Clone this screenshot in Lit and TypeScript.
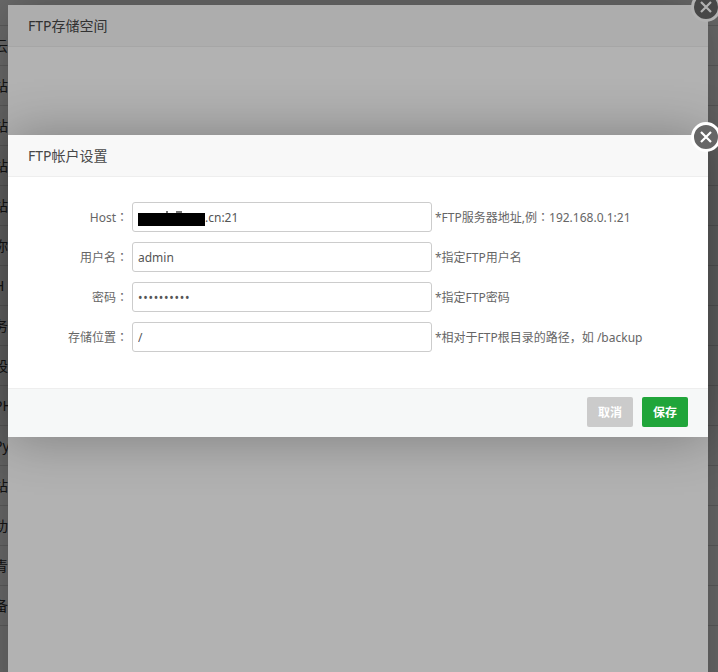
import { LitElement, html, css } from "lit";
import { customElement } from "lit/decorators.js";

const ROWS = ["", "云", "站", "站", "站", "站", "你", "H", "务", "股", "PH", "Py", "站", "功", "青", "备"];
const colon = html`<span class="colon">：</span>`;
const FIELDS = [
  { label: "Host", value: ".cn:21", type: "text", hint: html`*FTP服务器地址,例${colon}192.168.0.1:21`, hidden: true },
  { label: "用户名", value: "admin", type: "text", hint: html`*指定FTP用户名`, hidden: false },
  { label: "密码", value: "1234567890", type: "password", hint: html`*指定FTP密码`, hidden: false },
  { label: "存储位置", value: "/", type: "text", hint: html`*相对于FTP根目录的路径，如 /backup`, hidden: false },
];

@customElement("app-root")
export class AppRoot extends LitElement {
  static styles = css`
    :host {
      display: block;
      position: relative;
      width: 718px;
      height: 672px;
      overflow: hidden;
      background: #fff;
      font-family: "Noto Sans", "Noto Sans CJK SC", sans-serif;
      color: #333;
    }
    .page { margin-top: -14px; }
    .row {
      box-sizing: border-box;
      height: 40px;
      line-height: 39px;
      border-bottom: 1px solid #ddd;
      font-size: 14px;
      text-indent: -6px;
    }
    .mask { position: absolute; inset: 0; }
    .mask.first { background: rgba(0, 0, 0, 0.4); }
    .mask.second { background: rgba(0, 0, 0, 0.3); }
    .modal {
      position: absolute;
      left: 8px;
      width: 700px;
      background: #fff;
      box-shadow: 1px 1px 50px rgba(0, 0, 0, 0.3);
    }
    .modal.back { top: 5px; height: 720px; }
    .modal.front { top: 135px; height: 302px; display: flex; flex-direction: column; }
    .head {
      box-sizing: border-box;
      height: 42px;
      line-height: 41px;
      padding-left: 20px;
      font-size: 14px;
      color: #484848;
      background: #f8f8f8;
      border-bottom: 1px solid #eee;
    }
    .close {
      position: absolute;
      top: -13px;
      right: -13px;
      width: 30px;
      height: 30px;
      box-sizing: border-box;
      border-radius: 50%;
      border: 3px solid #fff;
      background: #666;
      display: flex;
      align-items: center;
      justify-content: center;
    }
    .close svg { display: block; }
    .form {
      flex: 1;
      padding-top: 25px;
      display: flex;
      flex-direction: column;
      gap: 10px;
    }
    .field { display: flex; align-items: center; height: 30px; font-size: 12px; }
    .label { width: 120px; text-align: right; color: #666; margin-right: 4px; }
    .colon { font-family: "Noto Sans CJK TC", sans-serif; }
    .box { position: relative; width: 300px; height: 30px; margin-right: 3px; }
    input {
      box-sizing: border-box;
      width: 100%;
      height: 100%;
      border: 1px solid #ccc;
      border-radius: 3px;
      padding: 0 5px;
      margin: 0;
      background: #fff;
      font: inherit;
      font-size: 12px;
      color: #555;
      outline: none;
    }
    input[type="password"] { letter-spacing: 0.7px; }
    input.redacted { padding-left: 72px; }
    .ink {
      position: absolute;
      left: 6px;
      top: 11px;
      width: 67px;
      height: 13px;
      background: #000;
    }
    .ink::before,
    .ink::after {
      content: "";
      position: absolute;
      top: -2px;
      height: 2px;
      background: #777;
    }
    .ink::before { left: 28px; width: 2px; }
    .ink::after { left: 38px; width: 6px; }
    .hint { color: #666; white-space: nowrap; }
    .foot {
      box-sizing: border-box;
      height: 49px;
      padding: 8px 20px 10px 0;
      background: #f6f8f8;
      border-top: 1px solid #eee;
      display: flex;
      justify-content: flex-end;
      gap: 9px;
    }
    button {
      width: 46px;
      height: 30px;
      padding: 0;
      border: 0;
      border-radius: 2px;
      color: #fff;
      font: inherit;
      font-size: 12px;
      font-weight: 700;
    }
    .cancel { background: #cbcbcb; }
    .save { background: #20a53a; }
  `;

  private closeBtn() {
    return html`<div class="close">
      <svg width="14" height="14" viewBox="0 0 14 14">
        <path d="M2 2 L12 12 M12 2 L2 12" stroke="#fff" stroke-width="2.2" fill="none" />
      </svg>
    </div>`;
  }

  render() {
    return html`
      <div class="page">${ROWS.map((r) => html`<div class="row">${r}</div>`)}</div>
      <div class="mask first"></div>
      <div class="modal back">
        <div class="head">FTP存储空间</div>
        ${this.closeBtn()}
      </div>
      <div class="mask second"></div>
      <div class="modal front">
        <div class="head">FTP帐户设置</div>
        ${this.closeBtn()}
        <div class="form">
          ${FIELDS.map(
            (f) => html`<div class="field">
              <span class="label">${f.label}${colon}</span>
              <span class="box">
                <input class=${f.hidden ? "redacted" : ""} type=${f.type} .value=${f.value} />
                ${f.hidden ? html`<span class="ink"></span>` : ""}
              </span>
              <span class="hint">${f.hint}</span>
            </div>`
          )}
        </div>
        <div class="foot">
          <button class="cancel">取消</button>
          <button class="save">保存</button>
        </div>
      </div>
    `;
  }
}
